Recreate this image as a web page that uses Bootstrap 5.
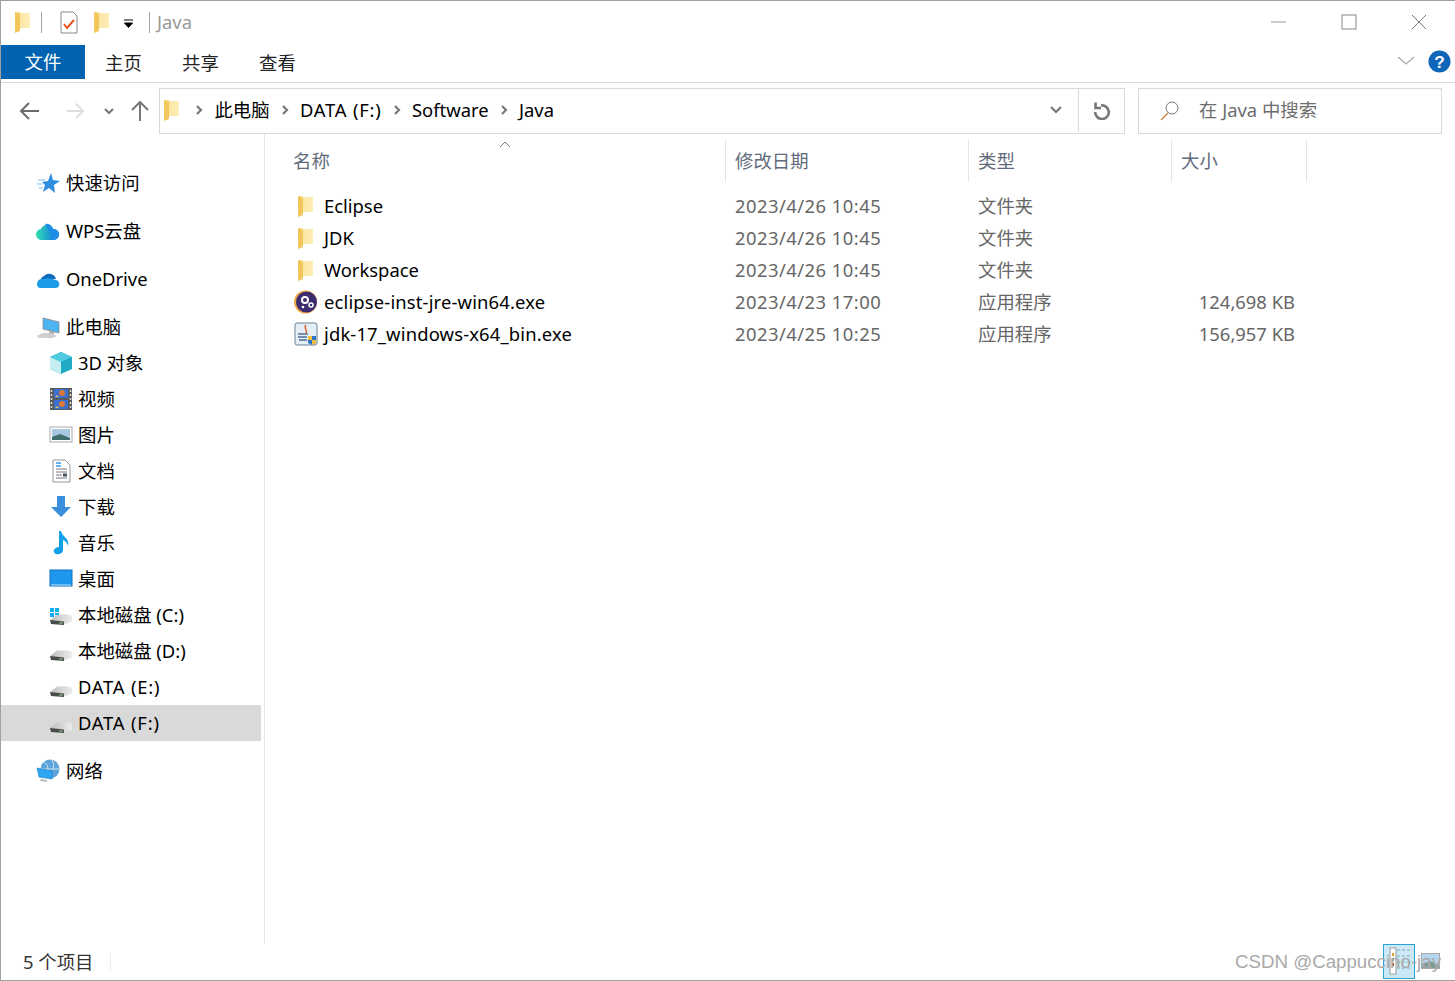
<!DOCTYPE html>
<html lang="zh-CN"><head><meta charset="utf-8"><title>Java</title>
<link href="https://cdn.jsdelivr.net/npm/bootstrap@5.3.0/dist/css/bootstrap.min.css" rel="stylesheet">
<style>
html,body{height:100%;overflow:hidden}
body{background:#fff;font-family:"Noto Sans","Noto Sans CJK SC",sans-serif;font-size:18.4px;color:#000;line-height:1}
.defs{position:absolute;width:0;height:0}
.win{width:1455px;height:981px;border:solid #a0a0a0;border-width:1px 0 1px 1px;position:relative}
.tbar{height:43px;padding-left:10px}
.tsep{width:1px;height:21px;background:#a0a0a0}
.m6{margin-left:6px}.m17{margin-left:17px}.m11{margin-left:11px}.m8{margin-left:8px}.m13{margin-left:13px}.m7{margin-left:7px}
.ttl{color:#999}
.wbtns{padding-right:8px}
.tabs{height:38px;border-bottom:1px solid #d9d9d9;margin-top:1px}
.ftab{width:84px;height:34px;background:#0063b1;color:#fff;text-align:center;line-height:34px}
.rtab{width:77px;text-align:center;line-height:33px;height:33px;margin-top:1px;color:#222}
.hchev{margin-right:13px}
.addr{height:52px;padding-top:5px}
.navb{width:158px;height:46px;padding-left:18px}
.nb1{margin-left:19px}.nb2{margin-left:17px}
.path{width:966px;height:46px;border:1px solid #d9d9d9;padding-bottom:1px}
.chev{margin:0 11.200px}
.dta{letter-spacing:.8px}
.pdrop{width:45px;height:44px;border-right:1px solid #d9d9d9}
.refr{width:45px}
.sbox{width:304px;height:46px;border:1px solid #d9d9d9;margin-left:13px;color:#6d6d6d;padding-left:20px}
.stxt{padding-left:2px}
.cont{height:810px}
.side{width:264px;height:810px;border-right:1px solid #e5e5e5;padding-top:31px}
.sitem{height:36px;width:260px;padding-left:35px;gap:6px}
.sitem.sub{padding-left:48px;gap:5px}
.gapt{margin-top:12px}
.sel{background:#d9d9d9}
.sico{width:24px;height:24px;flex:none}
.list{flex:1;padding-left:19px}
.hdr{height:42px;margin-top:6px;color:#5f6b7a;position:relative}
.hc{height:42px;border-right:1px solid #e5e5e5;padding-left:9px}
.c1{width:442px}.c2{width:243px}.c3{width:203px}.c4{width:135px}
.sorta{position:absolute;left:215px;top:1px}
.files{margin-top:8px}
.frow{height:32px}
.fname{width:443px;padding-left:10px;gap:6px}
.ls{letter-spacing:.16px}
.fd{color:#666}
.dt{letter-spacing:.47px}
.sz{text-align:right;padding-right:13px}
.stat{height:36px;color:#333;padding-left:22px}
.ssep{width:1px;height:18px;background:#eee;margin-left:17px}
.wm{position:absolute;right:14px;bottom:8px;color:#a9a9a9;font-family:"Liberation Sans",sans-serif;font-size:18.7px}
.hl{position:absolute;left:1382px;top:943px;width:32px;height:35px;background:#cbe8f7;border:1px solid #2ea0d8}
.thumb{position:absolute;left:1420px;top:952px;width:19px;height:16px}
</style></head><body>
<svg class="defs">
<defs>
<linearGradient id="fy" x1="0" x2="1"><stop offset="0" stop-color="#fbe29a"/><stop offset="1" stop-color="#fdeeb8"/></linearGradient>
<linearGradient id="dg" x1="0" x2="1"><stop offset="0" stop-color="#bdbdbd"/><stop offset="1" stop-color="#ececec"/></linearGradient>
<linearGradient id="wg" x1="0" x2="1"><stop offset="0" stop-color="#2fe0b0"/><stop offset="1" stop-color="#1268e8"/></linearGradient>
<symbol id="fold" viewBox="0 0 24 24"><path d="M4 2h5l1 1h9v15H4z" fill="url(#fy)"/><path d="M4 2l5 2v17l-5 2z" fill="#f2c65a"/></symbol>
<symbol id="drive" viewBox="0 0 24 24"><path d="M1 17l7-5.500h11q4 1 4 3v4l-8 3z" fill="url(#dg)"/><path d="M1 17l14 1.500V22L2 21z" fill="#4a4a4a"/><path d="M10 20h4" stroke="#8fcf8f"/></symbol>
</defs></svg>
<div class="win d-flex flex-column">
 <div class="tbar d-flex align-items-center">
  <svg class="sico"><use href="#fold"/></svg>
  <span class="tsep m6"></span>
  <svg class="m17" width="20" height="24" viewBox="0 0 20 24"><path d="M2 2h12l4 4v17H2z" fill="#fff" stroke="#8a8a8a"/><path d="M5 14l3 4 7-8" fill="none" stroke="#e8541e" stroke-width="2"/></svg>
  <svg class="m11 sico"><use href="#fold"/></svg>
  <svg class="m8" width="14" height="24" viewBox="0 0 14 24"><path d="M2 10h9M2.500 13h8l-4 4.500z" stroke="#000" fill="#000"/></svg>
  <span class="tsep m13"></span>
  <span class="ttl m7">Java</span>
  <div class="ms-auto d-flex align-items-center wbtns">
   <svg width="70" height="24" viewBox="0 0 70 24"><path d="M0 12h15" stroke="#999"/></svg>
   <svg width="70" height="24" viewBox="0 0 70 24"><rect x="1" y="5" width="14" height="14" fill="none" stroke="#888"/></svg>
   <svg width="36" height="24" viewBox="0 0 36 24"><path d="M1 5l14 14M15 5L1 19" stroke="#777" fill="none"/></svg>
  </div>
 </div>
 <div class="tabs d-flex">
  <div class="ftab">文件</div><div class="rtab">主页</div><div class="rtab">共享</div><div class="rtab">查看</div>
  <div class="ms-auto d-flex align-items-center pe-1 pb-1">
   <svg width="18" height="12" viewBox="0 0 18 12" class="hchev"><path d="M1 2l8 7 8-7" fill="none" stroke="#aaa" stroke-width="1.300"/></svg>
   <svg width="23" height="23" viewBox="0 0 24 24"><circle cx="12" cy="12" r="11.500" fill="#0f66b8"/><text x="12" y="18.500" text-anchor="middle" fill="#fff" font-size="18" font-weight="700" font-family="Liberation Sans">?</text></svg>
  </div>
 </div>
 <div class="addr d-flex">
  <div class="navb d-flex align-items-center">
   <svg width="22" height="20" viewBox="0 0 22 20"><path d="M20 10H2M10 2l-8 8 8 8" fill="none" stroke="#6b6b6b" stroke-width="2"/></svg>
   <svg class="ms-4" width="20" height="20" viewBox="0 0 22 20"><path d="M2 10h18M12 2l8 8-8 8" fill="none" stroke="#ddd" stroke-width="2"/></svg>
   <svg class="nb1" width="10" height="8" viewBox="0 0 10 8"><path d="M1 2l4 4 4-4" fill="none" stroke="#777" stroke-width="2"/></svg>
   <svg class="nb2" width="18" height="22" viewBox="0 0 18 22"><path d="M9 21V3M1 10l8-8 8 8" fill="none" stroke="#777" stroke-width="2"/></svg>
  </div>
  <div class="path d-flex align-items-center">
   <svg class="sico"><use href="#fold"/></svg>
   <svg class="chev" width="8" height="12" viewBox="0 0 8 12"><path d="M2 2l4 4-4 4" fill="none" stroke="#777" stroke-width="2.200"/></svg>
   <span>此电脑</span>
   <svg class="chev" width="8" height="12" viewBox="0 0 8 12"><path d="M2 2l4 4-4 4" fill="none" stroke="#777" stroke-width="2.200"/></svg>
   <span class="dta">DATA (F:)</span>
   <svg class="chev" width="8" height="12" viewBox="0 0 8 12"><path d="M2 2l4 4-4 4" fill="none" stroke="#777" stroke-width="2.200"/></svg>
   <span>Software</span>
   <svg class="chev" width="8" height="12" viewBox="0 0 8 12"><path d="M2 2l4 4-4 4" fill="none" stroke="#777" stroke-width="2.200"/></svg>
   <span>Java</span>
   <div class="ms-auto pdrop d-flex align-items-center justify-content-center"><svg width="14" height="10" viewBox="0 0 14 10"><path d="M2 2l5 5 5-5" fill="none" stroke="#777" stroke-width="2.200"/></svg></div>
   <div class="refr d-flex align-items-center justify-content-center"><svg width="20" height="20" viewBox="0 0 20 20"><path d="M9 5.500A6.800 6.800 0 1 1 3.200 12M3.500 2.500V8H9" fill="none" stroke="#777" stroke-width="2.600"/></svg></div>
  </div>
  <div class="sbox d-flex align-items-center">
   <svg class="me-3" width="22" height="22" viewBox="0 0 22 22"><circle cx="13" cy="8" r="6" fill="none" stroke="#777"/><path d="M9 13l-7 7" stroke="#c87f3a" stroke-width="1.200"/></svg>
   <span class="stxt">在 Java 中搜索</span>
  </div>
 </div>
 <div class="cont d-flex">
  <div class="side">
   <div class="sitem d-flex align-items-center"><svg class="sico" viewBox="0 0 24 24"><path d="M15 2l2 7 7 1-6 4 1 8-6-5-6 4 2-7-3-3 6-1z" fill="#2f8ee0"/><path d="M2 9h7M1 13h5M3 17h4" stroke="#7cc0f0"/></svg><span>快速访问</span></div>
   <div class="sitem gapt d-flex align-items-center"><svg class="sico" viewBox="0 0 24 24"><path d="M6 21a5.500 5.500 0 0 1-1-11 6.500 6.500 0 0 1 12 0 5.500 5.500 0 0 1 1 11z" fill="url(#wg)"/><path d="M9 5a6.500 6.500 0 0 1 8 5 5.500 5.500 0 0 1 1 11h-5a6 6 0 0 0-1-10q-1-4-3-6z" fill="#1e8fe8"/></svg><span>WPS云盘</span></div>
   <div class="sitem gapt d-flex align-items-center"><svg class="sico" viewBox="0 0 24 24"><path d="M5 15a5 5 0 0 1 3-6 7 7 0 0 1 12 3z" fill="#0f6cbd"/><path d="M1 17a5 5 0 0 1 6-5l5-1a7 7 0 0 1 5 2h3a4.500 4.500 0 0 1 3 6q-1 2-3 2H4a4 4 0 0 1-3-4z" fill="#1c9ce8"/></svg><span>OneDrive</span></div>
   <div class="sitem gapt d-flex align-items-center"><svg class="sico" viewBox="0 0 24 24"><path d="M7 3l16 4v11L7 14z" fill="#4db4f2" stroke="#8a8a8a" stroke-width=".8"/><path d="M1 21l5-3h9l6 3-4 2H3z" fill="#cfcfcf"/><path d="M14 15l4 2v2l-5-1z" fill="#aaa"/></svg><span>此电脑</span></div>
   <div class="sitem sub d-flex align-items-center"><svg class="sico" viewBox="0 0 24 24"><path d="M12 1l11 5v12l-11 5L1 18V6z" fill="#1fa9c4"/><path d="M1 6l11 5 11-5-11-5z" fill="#4fcbe0"/><path d="M1 6l11 5v12L1 18z" fill="#c5eef2"/></svg><span>3D 对象</span></div>
   <div class="sitem sub d-flex align-items-center"><svg class="sico" viewBox="0 0 24 24"><rect x="1" y="1" width="22" height="22" fill="#5a5a5a"/><path d="M2.500 3v18M21.500 3v18" stroke="#ddd" stroke-width="1.500" stroke-dasharray="2 2"/><rect x="5" y="2" width="14" height="9" fill="#3b6fd0"/><rect x="5" y="13" width="14" height="9" fill="#3b6fd0"/><circle cx="13" cy="6" r="3" fill="#d9783a"/><circle cx="13" cy="17" r="3" fill="#d9783a"/><path d="M6 10l2-2 2 2zM6 21l2-2 2 2z" fill="#e0c060"/></svg><span>视频</span></div>
   <div class="sitem sub d-flex align-items-center"><svg class="sico" viewBox="0 0 24 24"><rect x="1" y="4" width="22" height="15" fill="#fff" stroke="#aaa"/><rect x="3" y="6" width="18" height="11" fill="#a8c8e0"/><path d="M3 14l8-3 10 4v2H3z" fill="#3e6e6e"/></svg><span>图片</span></div>
   <div class="sitem sub d-flex align-items-center"><svg class="sico" viewBox="0 0 24 24"><path d="M4 1h12l5 5v17H4z" fill="#fff" stroke="#999"/><path d="M7 4h5M7 7h5" stroke="#2f9be8" stroke-width="1.500"/><path d="M7 10h11M7 13h11M7 16h6M7 19h11" stroke="#778"/><rect x="14" y="14.500" width="4" height="3" fill="#456"/></svg><span>文档</span></div>
   <div class="sitem sub d-flex align-items-center"><svg class="sico" viewBox="0 0 24 24"><path d="M8 1h8v11h6L12 22 2 12h6z" fill="#3a8fdd"/></svg><span>下载</span></div>
   <div class="sitem sub d-flex align-items-center"><svg class="sico" viewBox="0 0 24 24"><path d="M10 0h2c1 6 9 7 7 15-1-4-3-5-5-6v10c0 3-4 5-7 4s-3-5 0-6c1-1 2-1 3-1z" fill="#11a0ea"/></svg><span>音乐</span></div>
   <div class="sitem sub d-flex align-items-center"><svg class="sico" viewBox="0 0 24 24"><rect x="1" y="3" width="22" height="16" fill="#1e98ee" stroke="#0c70c0"/><path d="M2 18h20" stroke="#bfe3fa"/></svg><span>桌面</span></div>
   <div class="sitem sub d-flex align-items-center"><svg class="sico" viewBox="0 0 24 24"><use href="#drive"/><path d="M1 5h4v4H1zM6 5h4v4H6zM1 10h4v4H1zM6 10h4v2H6z" fill="#10b0f0"/></svg><span>本地磁盘 (C:)</span></div>
   <div class="sitem sub d-flex align-items-center"><svg class="sico"><use href="#drive"/></svg><span>本地磁盘 (D:)</span></div>
   <div class="sitem sub d-flex align-items-center"><svg class="sico"><use href="#drive"/></svg><span class="dta">DATA (E:)</span></div>
   <div class="sitem sub sel d-flex align-items-center"><svg class="sico"><use href="#drive"/></svg><span class="dta">DATA (F:)</span></div>
   <div class="sitem gapt d-flex align-items-center"><svg class="sico" viewBox="0 0 24 24"><circle cx="14" cy="10" r="9.500" fill="#5ba3d9"/><path d="M8 3q5 3 4 8M16 1q3 4 1 9M5 10h18" stroke="#cfe6f5" fill="none"/><path d="M1 9l15 3v8L3 18z" fill="#2ea6f0" stroke="#1a80c8" stroke-width=".6"/><path d="M5 20l6 1v2l-7-1z" fill="#bbb"/></svg><span>网络</span></div>
  </div>
  <div class="list">
   <div class="hdr d-flex">
    <div class="hc c1 d-flex align-items-center">名称</div><div class="hc c2 d-flex align-items-center">修改日期</div><div class="hc c3 d-flex align-items-center">类型</div><div class="hc c4 d-flex align-items-center">大小</div>
    <svg class="sorta" width="12" height="8" viewBox="0 0 12 8"><path d="M1 6l5-5 5 5" fill="none" stroke="#777"/></svg>
   </div>
   <div class="files">
    <div class="frow d-flex align-items-center"><div class="fname d-flex align-items-center"><svg class="sico"><use href="#fold"/></svg><span>Eclipse</span></div><div class="c2 fd dt ps-2">2023/4/26 10:45</div><div class="c3 fd ps-2">文件夹</div></div>
    <div class="frow d-flex align-items-center"><div class="fname d-flex align-items-center"><svg class="sico"><use href="#fold"/></svg><span>JDK</span></div><div class="c2 fd dt ps-2">2023/4/26 10:45</div><div class="c3 fd ps-2">文件夹</div></div>
    <div class="frow d-flex align-items-center"><div class="fname d-flex align-items-center"><svg class="sico"><use href="#fold"/></svg><span>Workspace</span></div><div class="c2 fd dt ps-2">2023/4/26 10:45</div><div class="c3 fd ps-2">文件夹</div></div>
    <div class="frow d-flex align-items-center"><div class="fname d-flex align-items-center"><svg class="sico" viewBox="0 0 24 24"><circle cx="11.500" cy="12" r="11.500" fill="#f3a64a"/><circle cx="12.500" cy="12" r="10.500" fill="#3c2d6e"/><circle cx="11" cy="10" r="3" fill="none" stroke="#fff" stroke-width="2"/><circle cx="17" cy="15" r="2" fill="none" stroke="#fff" stroke-width="1.500"/><circle cx="9" cy="17" r="1.300" fill="#fff"/></svg><span class="ls">eclipse-inst-jre-win64.exe</span></div><div class="c2 fd dt ps-2">2023/4/23 17:00</div><div class="c3 fd ps-2">应用程序</div><div class="c4 fd sz">124,698 KB</div></div>
    <div class="frow d-flex align-items-center"><div class="fname d-flex align-items-center"><svg class="sico" viewBox="0 0 24 24"><rect x="1" y="1" width="22" height="22" rx="2" fill="#e6eef6" stroke="#6b8097"/><path d="M12 3c-3 3 2 5 0 8" fill="none" stroke="#d9652b" stroke-width="1.500"/><path d="M4 12h10M4 15h9M5 18h8" stroke="#4c7099" stroke-width="1.500"/><path d="M14 14h8v7l-4 2-4-2z" fill="#2c73c9"/><path d="M14 14h4v4h-4zM18 18h4v3l-4 2z" fill="#f2c33a"/></svg><span class="ls">jdk-17_windows-x64_bin.exe</span></div><div class="c2 fd dt ps-2">2023/4/25 10:25</div><div class="c3 fd ps-2">应用程序</div><div class="c4 fd sz">156,957 KB</div></div>
   </div>
  </div>
 </div>
 <div class="stat d-flex align-items-center"><span>5 个项目</span><span class="ssep"></span></div>
 <div class="hl"><svg width="30" height="33" viewBox="0 0 30 33"><rect x="6" y="3" width="6" height="26" fill="#fff" stroke="#999"/><path d="M9 8v3" stroke="#d9a52b" stroke-width="2"/><path d="M9 13v3" stroke="#4a9a4a" stroke-width="2"/><path d="M9 18v3" stroke="#c8402b" stroke-width="2"/><path d="M13 5h13M13 11h13M13 17h13M13 23h13" stroke="#8aa" stroke-dasharray="3 2"/></svg></div>
 <svg class="thumb" viewBox="0 0 19 16"><rect x=".5" y=".5" width="18" height="15" fill="#b5d5ee" stroke="#aaa"/><path d="M1 11l8-3 9 4v3H1z" fill="#7d9a96"/></svg>
 <div class="wm">CSDN @Cappuccino-jay</div>
</div>
<script src="https://cdn.jsdelivr.net/npm/bootstrap@5.3.0/dist/js/bootstrap.bundle.min.js"></script>
</body></html>
